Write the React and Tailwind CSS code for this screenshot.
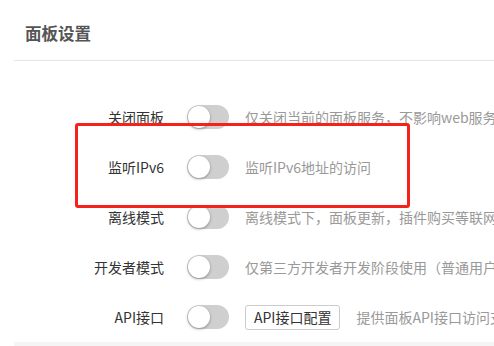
import React from 'react';

const rows = [
  { label: '关闭面板', desc: '仅关闭当前的面板服务，不影响web服务和站点的正常运行' },
  { label: '监听IPv6', desc: '监听IPv6地址的访问' },
  { label: '离线模式', desc: '离线模式下，面板更新，插件购买等联网操作将不可用' },
  { label: '开发者模式', desc: '仅第三方开发者开发阶段使用（普通用户请勿开启）' },
  { label: 'API接口', desc: '提供面板API接口访问支持', button: 'API接口配置' },
];

const Toggle = () => (
  <div className="relative w-[42px] h-[24px] shrink-0 rounded-full bg-[#cfcfcf]">
    <div className="absolute left-[1px] top-[1px] w-[22px] h-[22px] rounded-full bg-white shadow-[0_1px_3px_rgba(0,0,0,0.35)]" />
  </div>
);

const App = () => {
  return (
    <div
      className="relative w-[494px] h-[346px] overflow-hidden bg-white flex flex-col"
      style={{ fontFamily: '"Noto Sans CJK SC", "Noto Sans", sans-serif' }}
    >
      {/* Header */}
      <div className="h-[60px] pl-[25px] pt-[22px] text-[16.5px] leading-[22px] font-bold text-[#555]">面板设置</div>
      <div className="ml-[14px] border-t border-[#e6e6e6]" />

      {/* Settings rows */}
      <div className="pt-[31px]">
        {rows.map((row) => (
          <div key={row.label} className="h-[50px] flex items-center whitespace-nowrap">
            <div className="w-[164px] shrink-0 text-right text-[14px] text-[#333]">{row.label}</div>
            <div className="ml-[23px]">
              <Toggle />
            </div>
            {row.button && (
              <div className="ml-[16px] h-[25px] px-[8px] shrink-0 flex items-center rounded-[3px] border border-[#cccccc] text-[14px] text-[#333]">
                {row.button}
              </div>
            )}
            <div className="ml-[16px] text-[14px] text-[#999]">{row.desc}</div>
          </div>
        ))}
      </div>

      {/* bottom band */}
      <div className="ml-[14px] flex-1 bg-[#f5f5f5]" />

      {/* highlight box */}
      <div className="absolute left-[75px] top-[123px] w-[335px] h-[85px] rounded-[3px] border-[3px] border-[#f5211b]" />
    </div>
  );
};

export default App;
